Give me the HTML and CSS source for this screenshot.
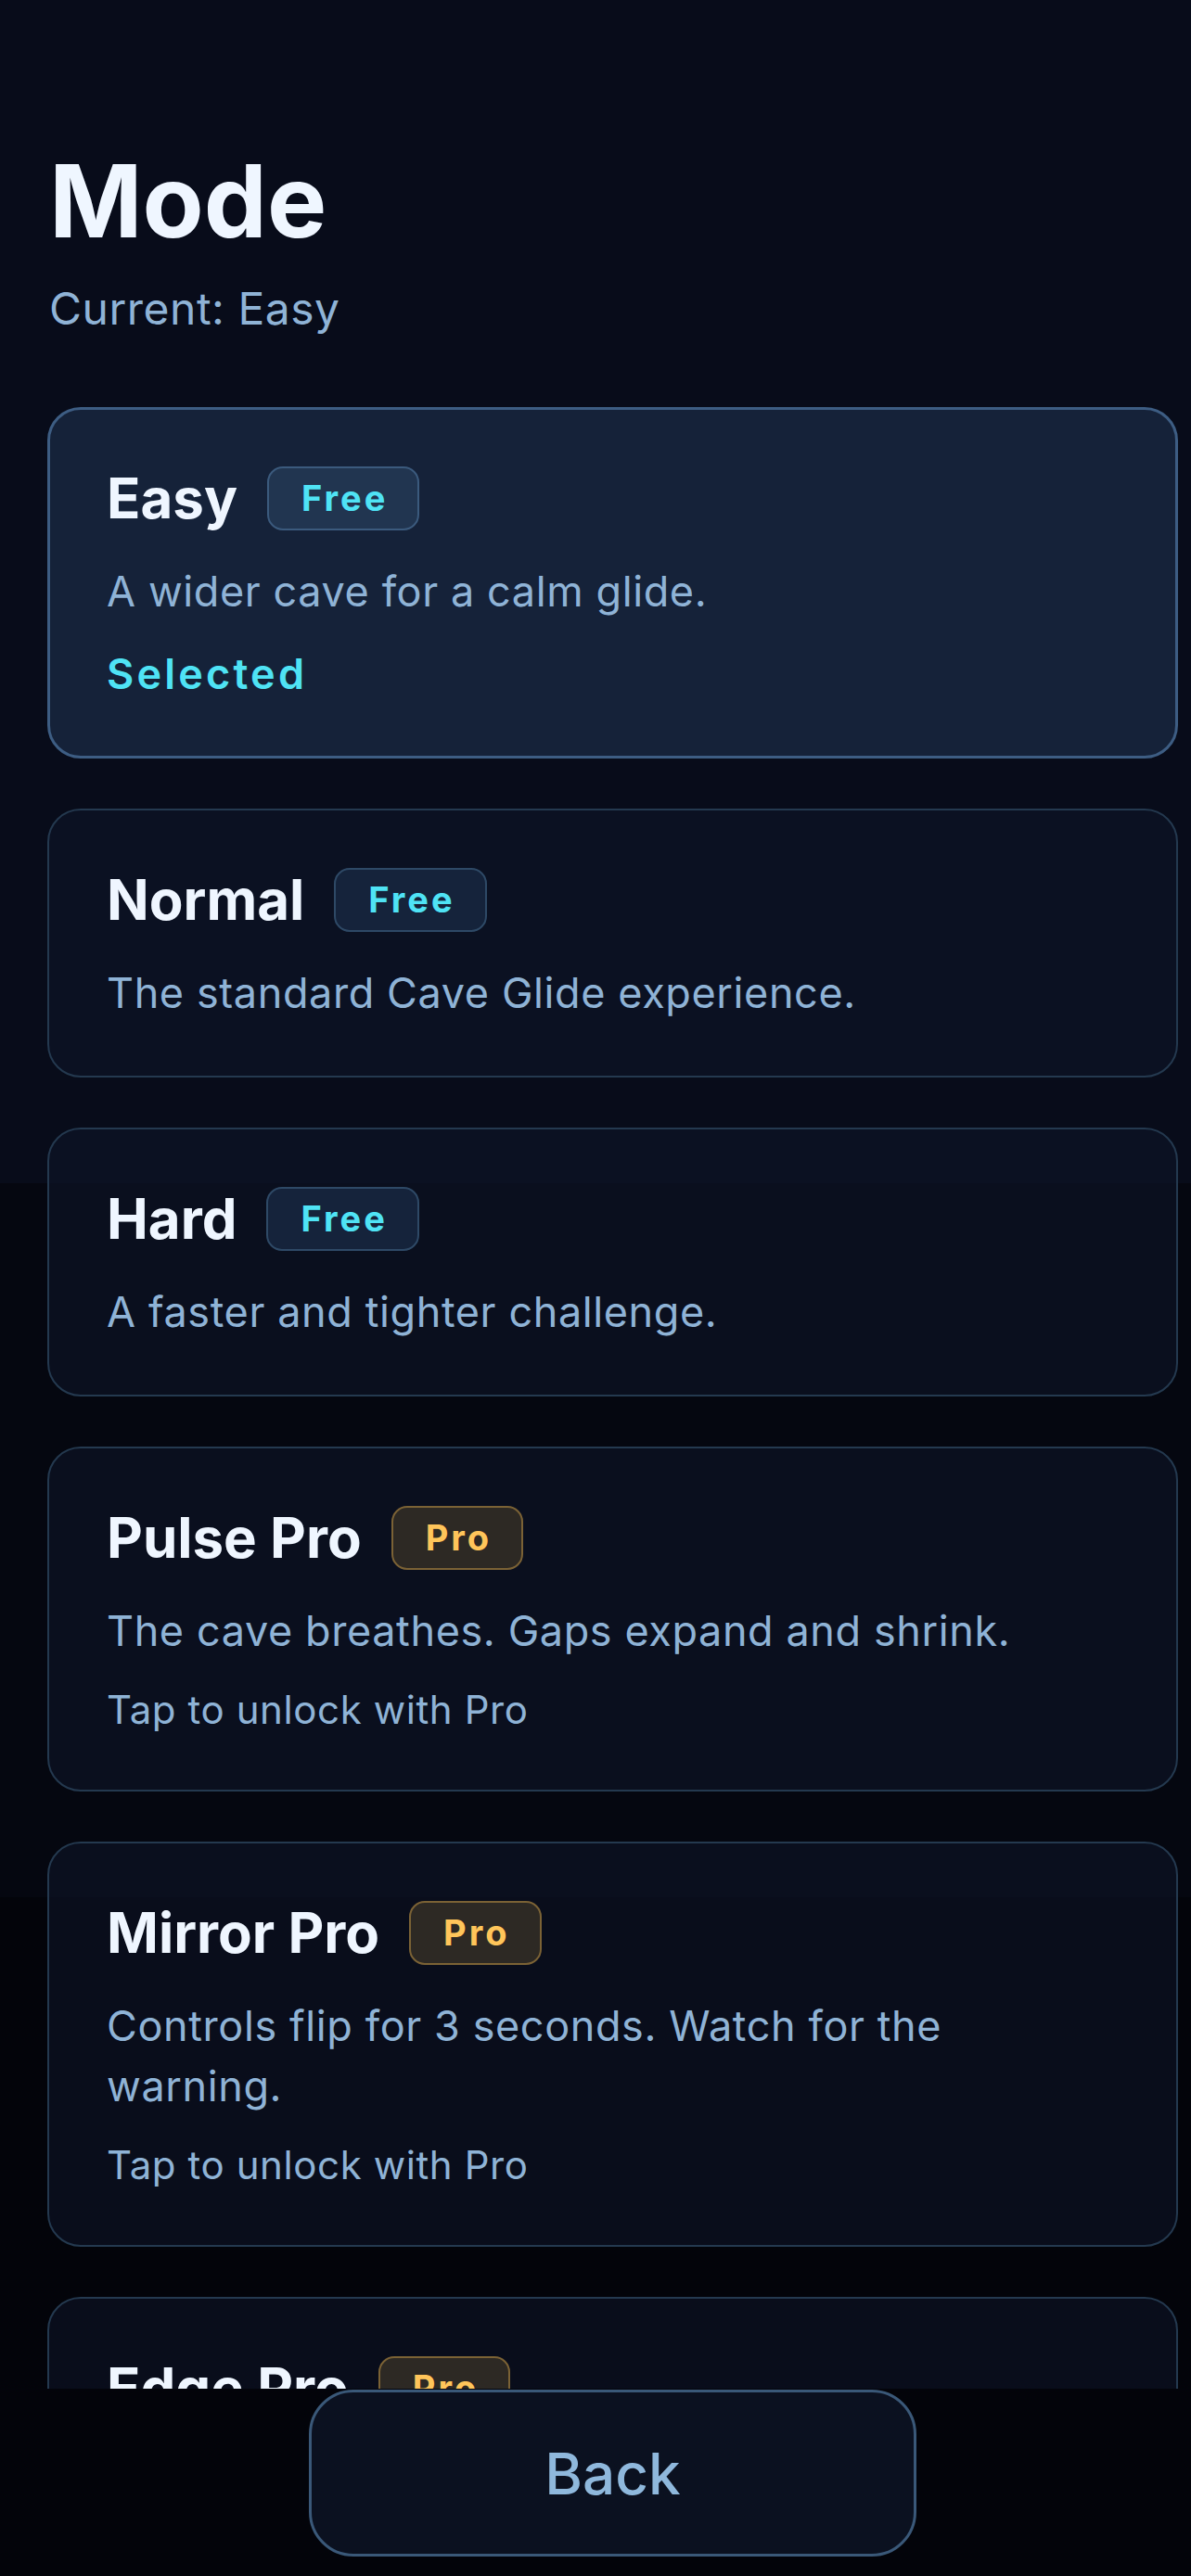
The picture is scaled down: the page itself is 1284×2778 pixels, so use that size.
FILE: index.html
```html
<!DOCTYPE html>
<html lang="en">
<head>
<meta charset="utf-8">
<title>Mode</title>
<link rel="stylesheet" href="styles.css">
</head>
<body>
<div class="screen">
  <main class="scroll">
    <header class="head">
      <h1 class="title">Mode</h1>
      <p class="current">Current: Easy</p>
    </header>
    <div class="list">
      <div class="card card-selected">
        <div class="card-head">
          <span class="card-title">Easy</span>
          <span class="badge badge-free">Free</span>
        </div>
        <p class="desc">A wider cave for a calm glide.</p>
        <p class="status">Selected</p>
      </div>
      <div class="card">
        <div class="card-head">
          <span class="card-title">Normal</span>
          <span class="badge badge-free">Free</span>
        </div>
        <p class="desc">The standard Cave Glide experience.</p>
      </div>
      <div class="card">
        <div class="card-head">
          <span class="card-title">Hard</span>
          <span class="badge badge-free">Free</span>
        </div>
        <p class="desc">A faster and tighter challenge.</p>
      </div>
      <div class="card">
        <div class="card-head">
          <span class="card-title">Pulse Pro</span>
          <span class="badge badge-pro">Pro</span>
        </div>
        <p class="desc">The cave breathes. Gaps expand and shrink.</p>
        <p class="lock">Tap to unlock with Pro</p>
      </div>
      <div class="card">
        <div class="card-head">
          <span class="card-title">Mirror Pro</span>
          <span class="badge badge-pro">Pro</span>
        </div>
        <p class="desc">Controls flip for 3 seconds. Watch for the warning.</p>
        <p class="lock">Tap to unlock with Pro</p>
      </div>
      <div class="card card-tail">
        <div class="card-head">
          <span class="card-title">Edge Pro</span>
          <span class="badge badge-pro">Pro</span>
        </div>
      </div>
    </div>
  </main>
  <footer class="footer">
    <button class="back" type="button">Back</button>
  </footer>
</div>
</body>
</html>
```
FILE: styles.css
```css
* { box-sizing: border-box; }

html, body {
  margin: 0;
  padding: 0;
  width: 1284px;
  height: 2778px;
  overflow: hidden;
  background: #03040a;
}

body {
  font-family: Inter, "Noto Sans", "DejaVu Sans", sans-serif;
  color: #eef5ff;
}

.screen {
  width: 1284px;
  height: 2778px;
  display: flex;
  flex-direction: column;
  background: linear-gradient(to bottom,
    #080c1a 0, #080c1a 1276px,
    #050710 1276px, #050710 2046px,
    #03040a 2046px, #03040a 100%);
}

.scroll {
  height: 2576px;
  flex: 0 0 2576px;
  overflow: hidden;
  padding: 152px 14px 0 51px;
}

.head {
  padding-left: 2px;
  margin-bottom: 75px;
}

.title {
  margin: 0;
  font-size: 108px;
  line-height: 130px;
  font-weight: 700;
  color: #eff6ff;
}

.current {
  margin: 20px 0 0;
  font-size: 48px;
  line-height: 62px;
  color: #8fb3d6;
  font-weight: 400;
  letter-spacing: 0.5px;
}

.list {
  display: flex;
  flex-direction: column;
  gap: 54px;
}

.card {
  border: 2px solid #24394f;
  border-radius: 36px;
  background: rgba(14, 22, 42, 0.55);
  padding: 60px 62px 57px 62px;
  display: flex;
  flex-direction: column;
}

.card-tail {
  min-height: 250px;
}

.card-selected {
  background: #152239;
  border: 3px solid #3d5d83;
  padding: 59px 61px 56px 61px;
}

.card-head {
  display: flex;
  align-items: center;
  gap: 32px;
  height: 72px;
}

.card-title {
  font-size: 60px;
  line-height: 72px;
  font-weight: 700;
  color: #eff6ff;
}

.badge {
  display: inline-flex;
  align-items: center;
  height: 69px;
  padding: 0 32px 0 35px;
  border-radius: 17px;
  border: 2px solid;
  font-size: 38px;
  line-height: 45px;
  font-weight: 700;
  letter-spacing: 3px;
}

.badge-free {
  color: #4fe3f5;
  background: #15233b;
  border-color: #2e4966;
}

.card-selected .badge-free {
  background: #213550;
  border-color: #3b5a7d;
}

.badge-pro {
  color: #ffc55a;
  background: #2d2924;
  border-color: #7b6235;
}

.desc {
  margin: 32px 0 0;
  max-width: 1040px;
  font-size: 45px;
  line-height: 65px;
  color: #8fb3d6;
  font-weight: 400;
  letter-spacing: 0.6px;
}

.status {
  margin: 24px 0 0;
  font-size: 45px;
  line-height: 65px;
  color: #4fe3f5;
  font-weight: 600;
  letter-spacing: 3.2px;
}

.lock {
  margin: 24px 0 0;
  font-size: 42px;
  line-height: 58px;
  color: #8fb3d6;
  font-weight: 400;
  letter-spacing: 0.6px;
}

.footer {
  flex: 1 1 auto;
  display: flex;
  justify-content: center;
  align-items: flex-start;
  padding: 1px 14px 0 51px;
}

.back {
  width: 655px;
  height: 180px;
  border-radius: 48px;
  border: 3px solid #3a5878;
  background: #0b1120;
  color: #8fb8dc;
  font-family: Inter, "Noto Sans", "DejaVu Sans", sans-serif;
  font-size: 62px;
  font-weight: 500;
  cursor: pointer;
}
```
